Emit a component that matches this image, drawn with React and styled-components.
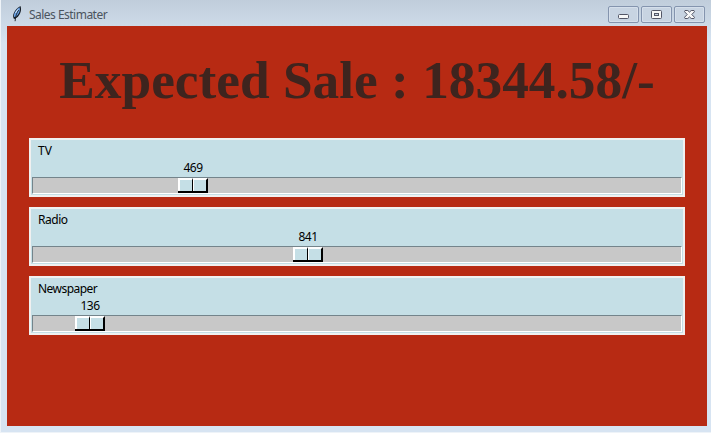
import React from "react";
import styled, { createGlobalStyle } from "styled-components";

const Global = createGlobalStyle`
  *, *::before, *::after { box-sizing: border-box; }
  body { margin: 0; overflow: hidden; background: #d7e4f2; }
`;

const Window = styled.main`
  width: 711px;
  height: 433px;
  display: flex;
  flex-direction: column;
  padding: 0 4px 7px 7px;
  background: linear-gradient(#c0cddb 0, #d7e4f2 44px, #d7e4f2 100%);
  box-shadow: inset 1px 0 #eef3f8, inset 0 -1px #eef3f8;
  font-family: "Noto Sans", "Open Sans", sans-serif;
  font-size: 12px;
`;

const TitleBar = styled.header`
  height: 26px;
  flex: none;
  display: flex;
  align-items: flex-start;
  padding: 6px 2px 0 4px;
`;

const Feather = styled.svg`
  display: block;
  flex: none;
  width: 13px;
  height: 16px;
`;

const Title = styled.h1`
  flex: 1;
  margin: 0 0 0 5px;
  font-size: 12px;
  font-weight: 400;
  line-height: 17px;
  letter-spacing: ${(p) => p.$spacing};
  color: #4b545e;
`;

const Controls = styled.div`
  display: flex;
  gap: 2px;
`;

const ControlButton = styled.button`
  width: 31px;
  height: 17px;
  padding: 0;
  display: flex;
  align-items: center;
  justify-content: center;
  border: 1px solid #8494ae;
  border-radius: 2px;
  background: #c8d4e2;
  box-shadow: inset 0 0 0 1px #d5dfeb;

  svg { display: block; }
`;

const Client = styled.section`
  height: 400px;
  padding: 22px 22px 0;
  background: #b72a13;
`;

const Heading = styled.h2`
  height: 90px;
  margin: 0;
  padding-top: 2px;
  text-align: center;
  white-space: nowrap;
  font: bold 53.33px/60px "Liberation Serif", serif;
  color: #3e241e;
`;

const ScaleList = styled.div`
  display: grid;
  gap: 10px;
`;

const Scale = styled.div`
  height: 59px;
  padding: 2px 1px 0;
  border: 2px solid #f0f0f0;
  background: #c5dfe6;
  color: #000;
`;

const Label = styled.div`
  height: 17px;
  padding-left: 6px;
  line-height: 17px;
  letter-spacing: ${(p) => p.$spacing};
`;

const Value = styled.div`
  width: 30px;
  height: 18px;
  line-height: 18px;
  text-align: center;
  letter-spacing: -0.5px;
`;

const Trough = styled.div`
  height: 17px;
  border: 1px solid;
  border-color: #74848b #fff #fff #74848b;
  background: #c8c8c8;
`;

const Thumb = styled.div`
  width: 30px;
  height: 15px;
  display: grid;
  grid-template-columns: 15px 15px;
  border-bottom: 2px solid #000;
  background: #c5dfe6;
`;

const ThumbHalf = styled.span`
  border-style: solid;
  border-color: #fff #000 #fff #fff;
  border-width: ${(p) => (p.$end ? "2px 2px 0 1px" : "2px 1px 0 2px")};
`;

const scales = [
  { label: "TV", value: 469, x: 146, spacing: "0px" },
  { label: "Radio", value: 841, x: 261, spacing: "-0.45px" },
  { label: "Newspaper", value: 136, x: 43, spacing: "-0.55px" },
];

function ScaleRow({ label, value, x, spacing }) {
  return (
    <Scale>
      <Label $spacing={spacing}>{label}</Label>
      <Value style={{ marginLeft: x }}>{value}</Value>
      <Trough>
        <Thumb style={{ marginLeft: x - 1 }}>
          <ThumbHalf />
          <ThumbHalf $end />
        </Thumb>
      </Trough>
    </Scale>
  );
}

export default function App() {
  return (
    <>
      <Global />
      <Window>
        <TitleBar>
          <Feather viewBox="0 0 13 16">
            <path d="M3 13 C.6 9.5 3.4 3.5 9.4 0 C10.8 3.4 9.8 8 6 11.5 L4.3 12.6Z" fill="#111820" />
            <path d="M8.7 1.3 C4.4 4 2.4 8 3.1 10.8 L4.6 11.2 C8.2 8 9.4 5 8.7 1.3Z" fill="#6ba3e6" />
            <path d="M7.6 4 C5.8 7 4.4 10 4.1 15.2" fill="none" stroke="#111820" strokeWidth=".9" />
            <path d="M4.5 7 7 3.4" stroke="#d6e9fb" />
          </Feather>
          <Title $spacing="-0.52px">Sales Estimater</Title>
          <Controls>
            <ControlButton aria-label="Minimize">
              <svg width="11" height="11" viewBox="0 0 11 11">
                <rect x=".5" y="5.5" width="10" height="4" rx="1" fill="#f7f7f7" stroke="#535666" />
              </svg>
            </ControlButton>
            <ControlButton aria-label="Maximize">
              <svg width="11" height="9" viewBox="0 0 11 9">
                <rect x=".5" y=".5" width="10" height="8" rx="1" fill="#f7f7f7" stroke="#535666" />
                <rect x="3.5" y="3.5" width="4" height="2" fill="#c8d4e2" stroke="#535666" />
              </svg>
            </ControlButton>
            <ControlButton aria-label="Close">
              <svg width="11" height="9" viewBox="0 0 11 9">
                <path d="M1 .5h2.8l1.7 1.6L7.2.5H10l.5 1.2-2.7 2.8 2.7 2.8-.5 1.2H7.2L5.5 6.9 3.8 8.5H1L.5 7.3l2.7-2.8L.5 1.7Z" fill="#f7f7f7" stroke="#535666" strokeLinejoin="round" />
              </svg>
            </ControlButton>
          </Controls>
        </TitleBar>
        <Client>
          <Heading>Expected Sale : 18344.58/-</Heading>
          <ScaleList>
            {scales.map((scale) => (
              <ScaleRow key={scale.label} {...scale} />
            ))}
          </ScaleList>
        </Client>
      </Window>
    </>
  );
}
